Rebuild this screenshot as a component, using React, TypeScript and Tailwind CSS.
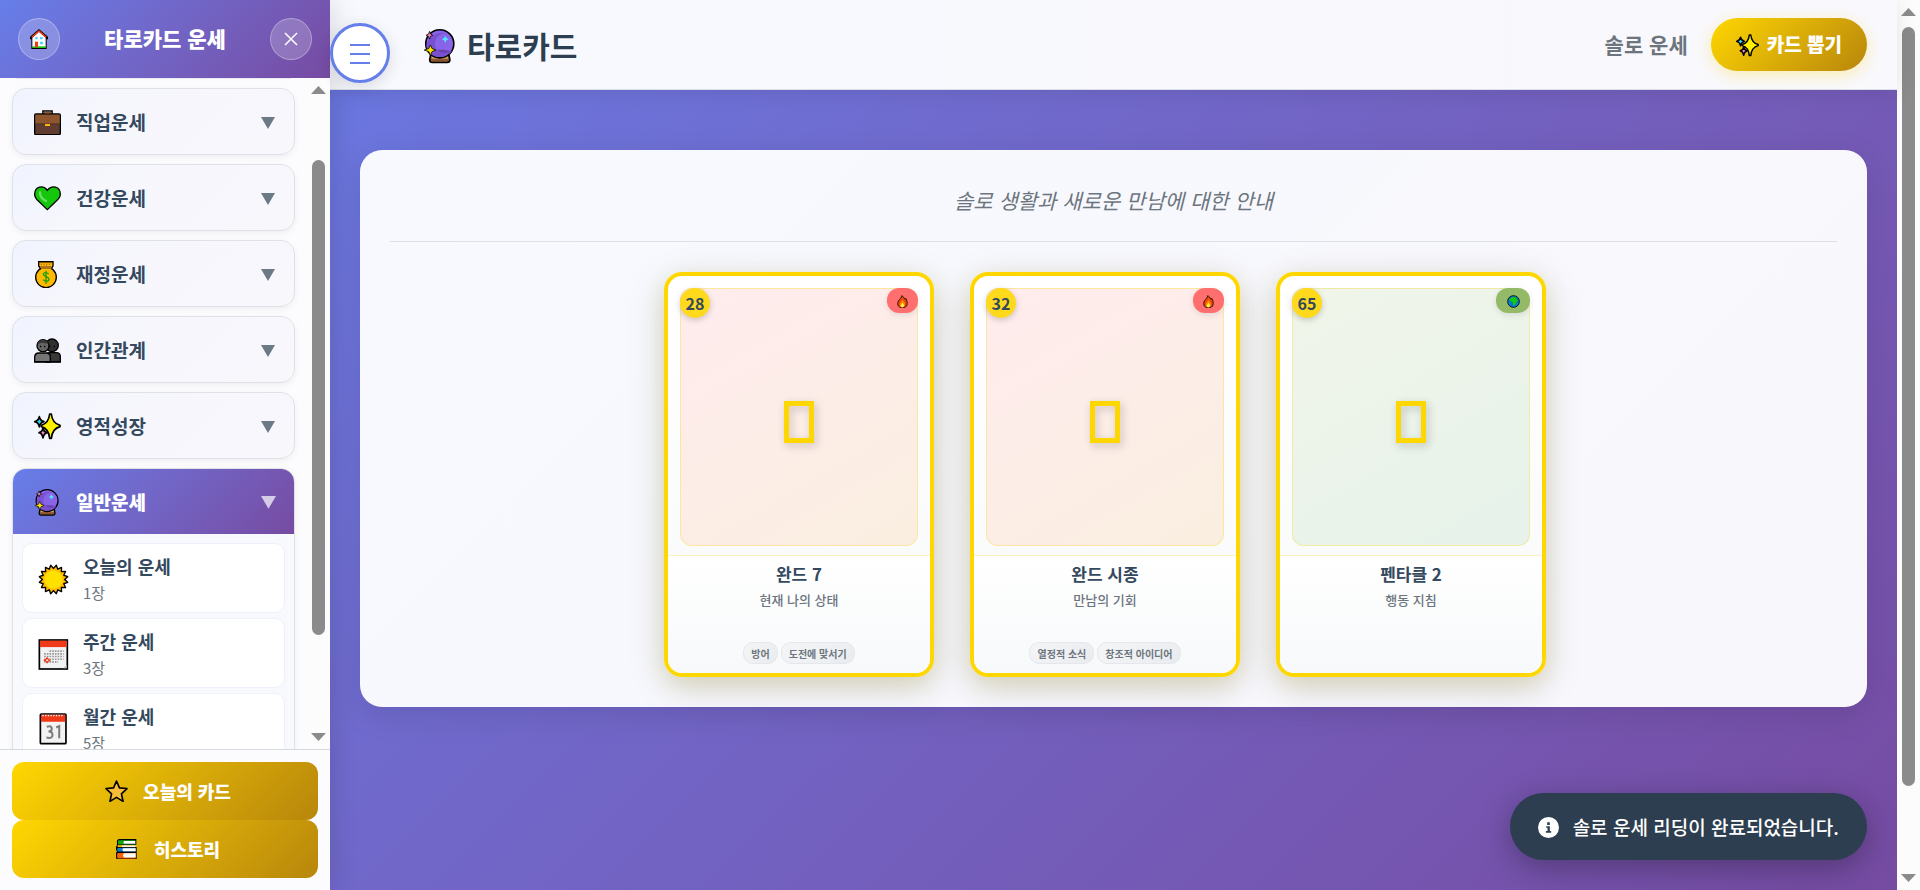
import React from 'react';
import type { ReactNode } from 'react';

type IconProps = { className?: string };

function HouseIcon({ className }: IconProps) {
  return (
    <svg viewBox="0 0 54 60" className={className} aria-hidden="true">
      <path d="M27 0 54 23v8h-4v29H4V31H0v-8z" fill="#000" />
      <path d="M27 8 47 26v29H7V26z" fill="#fff" />
      <path d="M27 3 50 23l-2 4L27 9 6 27l-2-4z" fill="#f03a17" />
      <path d="M7 52h40v5H7z" fill="#16c60c" />
      <path d="M15 38h9v17h-9z" fill="#f03a17" />
      <path d="M16 24h7v7h-7zM30 24h8v7h-8zM30 38h9v8h-9z" fill="#4fd5ff" />
    </svg>
  );
}

function BriefcaseIcon({ className }: IconProps) {
  return (
    <svg viewBox="0 0 81 76" className={className} aria-hidden="true">
      <path d="M27 12V3h27v9" fill="none" stroke="#000" strokeWidth="5" />
      <path d="M30 13V7h21v6" fill="none" stroke="#8e562e" strokeWidth="4" />
      <rect x="2" y="12" width="77" height="62" rx="4" fill="#603d30" stroke="#000" strokeWidth="4" />
      <path d="M4 14h73v28H4z" fill="#8e562e" />
      <path d="M4 42h73" stroke="#4a2c22" strokeWidth="3" />
      <path d="M33 42h15v6H33z" fill="#ffb900" />
    </svg>
  );
}

function HeartIcon({ className }: IconProps) {
  return (
    <svg viewBox="0 0 81 74" className={className} aria-hidden="true">
      <path d="M40 13C28-4 2 1 2 25c0 10 6 16 12 21l26 25 26-25c6-5 13-11 13-21C79 1 53-4 40 13z" fill="#16c60c" stroke="#000" strokeWidth="4" />
      <path d="M18 19c-1 13 5 19 18 26" fill="none" stroke="#6be065" strokeWidth="7" strokeLinecap="round" />
    </svg>
  );
}

function MoneyBagIcon({ className }: IconProps) {
  return (
    <svg viewBox="0 0 81 83" className={className} aria-hidden="true">
      <circle cx="36" cy="49" r="31" fill="#ffb900" stroke="#000" strokeWidth="4" />
      <path d="m20 23-6-8V2h43v13l-5 8z" fill="#ffb900" stroke="#000" strokeWidth="4" />
      <path d="M16 5h38M22 9v3m8-3v4m8-4v4m8-4v3" stroke="#5a3b00" strokeWidth="2" />
      <path d="M18 18h35" stroke="#a4632e" strokeWidth="5" />
      <path d="M21 22h31v7H21z" fill="#ffb900" />
      <path d="M44 39c-6-6-16-5-16 1 0 8 17 6 17 15 0 7-12 8-18 1M36 29v40" fill="none" stroke="#13a10e" strokeWidth="4" />
    </svg>
  );
}

function PeopleIcon({ className }: IconProps) {
  return (
    <svg viewBox="0 0 81 74" className={className} aria-hidden="true">
      <circle cx="54" cy="22" r="19" fill="#303030" stroke="#000" strokeWidth="4" />
      <path d="M35 72V56q0-12 12-12h20q12 0 12 12v16z" fill="#383838" stroke="#000" strokeWidth="4" />
      <circle cx="27" cy="23" r="18" fill="#666" stroke="#000" strokeWidth="4" />
      <path d="M10 19C12 4 38 0 44 17c-12 1-18-6-34 2z" fill="#383838" />
      <path d="M2 72V58q0-13 13-13h22q12 0 12 13v14z" fill="#767676" stroke="#000" strokeWidth="4" />
      <path d="M2 71h77" stroke="#000" strokeWidth="4" />
      <path d="M20 23v5m12-5v5m16-5v5m13-5v5" stroke="#000" strokeWidth="4" />
    </svg>
  );
}

function SparklesIcon({ className }: IconProps) {
  return (
    <svg viewBox="0 0 81 79" className={className} aria-hidden="true">
      <g stroke="#000" strokeWidth="5" strokeLinejoin="round">
        <path d="M27 45q2 12 13 14-11 3-13 16-2-13-12-16 10-2 12-14z" fill="#ff8ac0" />
        <path d="M16 11q2 12 14 15-12 3-14 16-2-13-14-16 12-3 14-15z" fill="#31d2f7" />
        <path d="M47 3h5q3 28 26 34v4q-23 6-26 35h-5Q44 47 22 41v-4Q44 31 47 3z" fill="#fff100" />
      </g>
    </svg>
  );
}

function CrystalBallIcon({ className }: IconProps) {
  return (
    <svg viewBox="0 0 82 89" className={className} aria-hidden="true">
      <path d="M19 68h48l2 11q0 7-7 7H24q-7 0-7-7z" fill="#8e562e" stroke="#000" strokeWidth="4" />
      <path d="M22 69h42v7H22z" fill="#d6a475" />
      <circle cx="43" cy="38" r="36" fill="#8764e8" stroke="#000" strokeWidth="4" />
      <path d="M16 61c12 14 42 13 53-3-5-6-44-7-53 3z" fill="#6a40ad" />
      <path d="M9 45C10 18 41 3 62 12 42 8 24 26 33 50c8 12 26 14 41 6C63 77 10 76 9 45z" fill="#7950cf" />
      <path d="m57 17 3 6 6 3-6 3-3 6-3-6-6-3 6-3z" fill="#50e6ff" />
      <path d="m17 6 2 7 6 3-6 3-2 7-3-7-6-3 6-3z" fill="#f488b7" stroke="#000" strokeWidth="2" />
      <path d="m19 41 4 9 10 4-10 4-4 10-4-10-12-4 12-4z" fill="#ffe400" stroke="#000" strokeWidth="2" />
    </svg>
  );
}

const sunRays = Array.from({ length: 32 }, (_, i) => {
  const angle = (Math.PI * (i + 1)) / 16;
  const radius = i % 2 === 0 ? 43 : 33;
  return `${46 + radius * Math.sin(angle)},${46 - radius * Math.cos(angle)}`;
}).join(' ');

function SunIcon({ className }: IconProps) {
  return (
    <svg viewBox="0 0 92 92" className={className} aria-hidden="true">
      <polygon points={sunRays} fill="#ffb900" stroke="#000" strokeWidth="4" strokeLinejoin="round" />
      <circle cx="46" cy="46" r="27" fill="#ffe100" />
    </svg>
  );
}

function CalendarIcon({ className }: IconProps) {
  return (
    <svg viewBox="0 0 92 92" className={className} aria-hidden="true">
      <rect x="4" y="3" width="83" height="86" fill="#f2f2f2" stroke="#000" strokeWidth="5" />
      <path d="M6 5h79v19H6z" fill="#f03a17" />
      <path
        d="M34 36h42M18 44h58M18 52h58M18 60h58M18 68h42"
        stroke="#9b9b9b"
        strokeWidth="5"
        strokeDasharray="5 3"
      />
      <path d="m27 56 3 4 5 3-5 3-3 4-3-4-5-3 5-3z" fill="#fff" stroke="#f03a17" strokeWidth="4" />
      <path d="m75 87 10-10v10z" fill="#c4c4c4" />
    </svg>
  );
}

function TearOffCalendarIcon({ className }: IconProps) {
  return (
    <svg viewBox="0 0 92 94" className={className} aria-hidden="true">
      <rect x="7" y="3" width="76" height="88" rx="3" fill="#f2f2f2" stroke="#000" strokeWidth="5" />
      <path d="M9 5h72v21H9z" fill="#f03a17" />
      <path d="M13 8h64" stroke="#fff" strokeWidth="4" strokeDasharray="4 4" />
      <path d="M26 41q15-5 15 6 0 8-10 8 12 0 12 10 0 12-18 8M54 43l9-4v36" fill="none" stroke="#7c7c7c" strokeWidth="6" />
    </svg>
  );
}

function StarIcon({ className }: IconProps) {
  return (
    <svg viewBox="0 0 70 68" className={className} aria-hidden="true">
      <path d="m35 3 9 21 23 2-17 16 5 23-20-12-20 12 5-23L3 26l23-2z" fill="#f7bd38" stroke="#000" strokeWidth="5" strokeLinejoin="round" />
    </svg>
  );
}

function BooksIcon({ className }: IconProps) {
  return (
    <svg viewBox="0 0 65 64" className={className} aria-hidden="true">
      <path d="M8 0h55v18h-4v7h5v36q0 3-3 3H5q-5-1-5-10V43l3-5-3-5v-9l3-5V5z" fill="#000" />
      <path d="M7 4h53v3H25v8h35v2H7q-3-7 0-13z" fill="#16a810" />
      <path d="M25 6h35v9H25q-4-4 0-9z" fill="#fff" />
      <path d="M5 19h55v6H5z" fill="#ffb900" />
      <path d="M18 20h42v5H18z" fill="#f5f5f5" />
      <path d="M5 28h56v11H5q-3-6 0-11z" fill="#087fd4" />
      <path d="M22 29h39v9H22q-4-4 0-9z" fill="#fff" />
      <path d="M5 43h56v17H5q-4-9 0-17z" fill="#f7630c" />
      <path d="M25 44h36v13H25q-6-6 0-13z" fill="#fff" />
    </svg>
  );
}

function FireIcon({ className }: IconProps) {
  return (
    <svg viewBox="0 0 36 44" className={className} aria-hidden="true">
      <path d="M16 2c3 4 8 6 10 12l3-3c8 15 6 31-11 31C1 42-2 26 8 15c2-3 7-6 8-13z" fill="#e8480c" stroke="#241006" strokeWidth="3" />
      <path d="M17 14c2 6 8 7 9 15 1 7-4 11-9 11S8 35 9 29c1-4 7-8 8-15z" fill="#ff8a00" />
      <path d="M18 25c2 4 5 5 5 9s-3 6-6 6-6-2-5-6c1-3 5-5 6-9z" fill="#fff04a" />
    </svg>
  );
}

function EarthIcon({ className }: IconProps) {
  return (
    <svg viewBox="0 0 40 40" className={className} aria-hidden="true">
      <circle cx="20" cy="20" r="18" fill="#0078d7" stroke="#06121d" strokeWidth="3" />
      <path d="M7 13 17 6l10 1 3 5 5 6-5 2-4 9-5 5-3-8-2-6-7-1z" fill="#16c60c" />
      <path d="m5 20 3 8-2-1zM32 27l2-4-1 7z" fill="#16c60c" />
    </svg>
  );
}

function InfoIcon({ className }: IconProps) {
  return (
    <svg viewBox="0 0 64 64" className={className} aria-hidden="true">
      <circle cx="32" cy="32" r="32" fill="#fff" />
      <path d="M28 16h8v8h-8zM25 28h11v15h4v5H24v-5h5V33h-4z" fill="#2c3e50" />
    </svg>
  );
}

function CloseIcon() {
  return (
    <svg viewBox="0 0 14 14" className="size-[14px]" aria-hidden="true">
      <path d="m1 1 12 12M13 1 1 13" stroke="#fff" strokeWidth="1.5" />
    </svg>
  );
}

function Triangle({ className }: IconProps) {
  return (
    <svg viewBox="0 0 14 12" className={className} aria-hidden="true">
      <path d="M0 0h14L7 12z" fill="currentColor" />
    </svg>
  );
}

function ScrollArrow({ down = false }: { down?: boolean }) {
  return (
    <svg viewBox="0 0 15 8" className="h-2 w-[15px] shrink-0" aria-hidden="true">
      <path d={down ? 'M0 0h15L7.500 8z' : 'M0 8h15L7.500 0z'} fill="#8b8b8b" />
    </svg>
  );
}

function ScrollRail({ before, thumb, after }: { before: number; thumb: number; after: number }) {
  return (
    <div className="flex w-[23px] shrink-0 flex-col items-center bg-[#fcfcfc] py-2" aria-hidden="true">
      <ScrollArrow />
      <div className="my-[11px] flex min-h-0 flex-1 flex-col">
        <div style={{ flexGrow: before }} />
        <div className="w-[13px] rounded-full bg-[#8b8b8b]" style={{ flexGrow: thumb }} />
        <div style={{ flexGrow: after }} />
      </div>
      <ScrollArrow down />
    </div>
  );
}

const categories: { label: string; icon: ReactNode }[] = [
  { label: '직업운세', icon: <BriefcaseIcon className="w-[27px]" /> },
  { label: '건강운세', icon: <HeartIcon className="w-[27px]" /> },
  { label: '재정운세', icon: <MoneyBagIcon className="w-[27px]" /> },
  { label: '인간관계', icon: <PeopleIcon className="w-[27px]" /> },
  { label: '영적성장', icon: <SparklesIcon className="w-[27px]" /> },
];

const generalReadings: { label: string; count: string; icon: ReactNode }[] = [
  { label: '오늘의 운세', count: '1장', icon: <SunIcon className="w-[31px]" /> },
  { label: '주간 운세', count: '3장', icon: <CalendarIcon className="w-[31px]" /> },
  { label: '월간 운세', count: '5장', icon: <TearOffCalendarIcon className="w-[31px]" /> },
];

type Card = {
  number: number;
  name: string;
  position: string;
  element: 'fire' | 'earth';
  keywords: string[];
};

const cards: Card[] = [
  { number: 28, name: '완드 7', position: '현재 나의 상태', element: 'fire', keywords: ['방어', '도전에 맞서기'] },
  { number: 32, name: '완드 시종', position: '만남의 기회', element: 'fire', keywords: ['열정적 소식', '창조적 아이디어'] },
  { number: 65, name: '펜타클 2', position: '행동 지침', element: 'earth', keywords: [] },
];

function Sidebar() {
  return (
    <aside className="relative z-10 flex w-[330px] shrink-0 flex-col bg-[#fcfcfe] shadow-[4px_0_24px_rgba(0,0,0,0.12)]">
      <header className="flex h-[78px] shrink-0 items-center justify-between bg-linear-135 from-[#667eea] to-[#764ba2] px-[18px]">
        <button aria-label="홈" className="flex size-[42px] items-center justify-center rounded-full border border-white/30 bg-white/20">
          <HouseIcon className="w-[18px]" />
        </button>
        <h2 className="text-[21px] font-black text-white">타로카드 운세</h2>
        <button aria-label="닫기" className="flex size-[42px] items-center justify-center rounded-full border border-white/30 bg-white/20">
          <CloseIcon />
        </button>
      </header>

      <div className="flex min-h-0 flex-1">
        <nav className="flex min-w-0 flex-1 flex-col gap-[9px] overflow-hidden px-3">
          <div className="mx-1 h-px shrink-0 bg-[#e9ebf0] shadow-[0_2px_6px_rgba(0,0,0,0.06)]" />
          {categories.map((c) => (
            <button
              key={c.label}
              className="flex h-[67px] shrink-0 items-center rounded-[14px] border border-[#dee2e6] bg-linear-135 from-[#f0f4ff] via-[#f6f6fd] via-30% to-[#f8f7fc] pt-0.5 pr-[19px] pl-[21px] text-left shadow-[0_2px_6px_rgba(0,0,0,0.06)]"
            >
              {c.icon}
              <span className="ml-[15px] flex-1 text-[19px] font-bold text-[#34495e]">{c.label}</span>
              <Triangle className="w-[14px] text-[#6c7a86]" />
            </button>
          ))}
          <section className="shrink-0 overflow-hidden rounded-[14px] border border-[#dee2e6] bg-[#f8f9fc] shadow-[0_2px_6px_rgba(0,0,0,0.06)]">
            <button
              aria-expanded="true"
              className="flex h-[65px] w-full items-center bg-linear-135 from-[#667eea] to-[#764ba2] pt-0.5 pr-[18px] pl-[21px] text-left"
            >
              <CrystalBallIcon className="w-[25px]" />
              <span className="ml-[17px] flex-1 text-[19px] font-black text-white">일반운세</span>
              <Triangle className="w-[15px] text-white/70" />
            </button>
            <ul className="flex flex-col gap-[5px] px-[9px] py-[9px]">
              {generalReadings.map((r) => (
                <li key={r.label}>
                  <button className="flex h-[70px] w-full items-center rounded-[10px] border border-[#eef1fb] bg-white px-[15px] pt-0.5 text-left">
                    {r.icon}
                    <span className="ml-[14px] flex flex-col">
                      <span className="text-[18px] leading-[27px] font-semibold text-[#34495e]">{r.label}</span>
                      <span className="text-[15px] leading-[25px] text-[#6c757d]">{r.count}</span>
                    </span>
                  </button>
                </li>
              ))}
            </ul>
          </section>
        </nav>
        <ScrollRail before={55} thumb={475} after={87} />
      </div>

      <footer className="flex shrink-0 flex-col border-t border-[#d5dadf] p-3">
        <button className="flex h-[58px] items-center justify-center gap-[15px] rounded-xl bg-linear-135 from-[#ffd700] to-[#b8860b] pl-1.5 text-[18px] font-black text-white">
          <StarIcon className="w-[23px]" />
          오늘의 카드
        </button>
        <button className="flex h-[58px] items-center justify-center gap-[17px] rounded-xl bg-linear-135 from-[#ffd700] to-[#b8860b] pl-1.5 text-[18px] font-black text-white">
          <BooksIcon className="w-[21px]" />
          히스토리
        </button>
      </footer>
    </aside>
  );
}

function TopBar() {
  return (
    <header className="flex h-[90px] shrink-0 items-center border-b border-[#dcdfe8] bg-linear-to-r from-[#f7f9fe] to-[#f9f8fc] pr-[30px] shadow-[0_2px_20px_rgba(0,0,0,0.1)]">
      <button
        aria-label="메뉴"
        className="relative z-20 mb-[6px] flex size-[60px] items-center justify-center self-end rounded-full border-3 border-[#667eea] bg-white shadow-[0_4px_16px_rgba(0,0,0,0.12)]"
      >
        <svg viewBox="0 0 20 20" className="mt-0.5 size-5" aria-hidden="true">
          <path d="M0 1h20M0 10h20M0 19h20" stroke="#667eea" strokeWidth="2" />
        </svg>
      </button>
      <h1 className="ml-[33px] flex items-center gap-3 text-[30px] leading-10 font-bold text-[#2c3e50]">
        <CrystalBallIcon className="mt-1 w-8" />
        타로카드
      </h1>
      <div className="ml-auto flex items-center gap-[23px]">
        <span className="text-[21px] font-semibold text-[#6c757d]">솔로 운세</span>
        <button className="flex h-[53px] items-center gap-2 rounded-full bg-linear-135 from-[#ffd700] to-[#b8860b] px-[25px] text-[19px] font-black text-white shadow-[0_4px_16px_rgba(255,215,0,0.3)]">
          <SparklesIcon className="mt-0.5 w-[23px]" />
          카드 뽑기
        </button>
      </div>
    </header>
  );
}

function TarotCard({ card }: { card: Card }) {
  const fire = card.element === 'fire';
  return (
    <article className="flex h-[405px] w-[270px] flex-col overflow-hidden rounded-[18px] border-4 border-[#ffd700] bg-linear-to-b from-white to-[#f8f9fa] shadow-[0_10px_40px_rgba(0,0,0,0.12),0_8px_24px_rgba(184,160,11,0.2)]">
      <div className="px-3 pt-3 pb-[9px]">
        <div
          className={
            'relative flex h-[258px] items-center justify-center rounded-xl border border-[#ffd700]/30 bg-linear-150 ' +
            (fire ? 'from-[#ffecee] to-[#faeee0]' : 'from-[#f1f5ea] to-[#e6f2ea]')
          }
        >
          <span className="absolute -top-px -left-px flex size-[30px] items-center justify-center rounded-full bg-[#ffd91c] text-[16px] font-bold text-[#34495e] shadow-[0_2px_6px_rgba(0,0,0,0.2)]">
            {card.number}
          </span>
          <span
            className={
              'absolute -top-px -right-px flex h-[25px] items-center justify-center rounded-xl shadow-[0_2px_6px_rgba(0,0,0,0.1)] ' +
              (fire ? 'w-[31px] bg-[#ff6f6f]' : 'w-[34px] bg-[#95ba67]')
            }
          >
            {fire ? <FireIcon className="mt-0.5 w-[11px]" /> : <EarthIcon className="mt-0.5 w-[13px]" />}
          </span>
          <div className="mt-2.5 h-[42px] w-[30px] border-5 border-[#ffd700] drop-shadow-[2px_3px_4px_rgba(0,0,0,0.2)]" />
        </div>
      </div>
      <div className="flex flex-1 flex-col items-center border-t border-[#fff0c0] bg-linear-to-b from-white to-[#f7f9fa] pt-1.5 pb-[9px]">
        <h3 className="text-[17px] leading-6 font-bold text-[#34495e]">{card.name}</h3>
        <p className="mt-px text-[13px] leading-[26px] font-medium text-[#6c757d]">{card.position}</p>
        <div className="mt-auto flex gap-[3px]">
          {card.keywords.map((k) => (
            <span
              key={k}
              className="flex h-[22px] items-center rounded-[10px] border border-[#e4e7eb] bg-linear-135 from-[#f4f5f7] to-[#e9ecef] px-[7px] text-[10px] font-semibold text-[#6c757d]"
            >
              {k}
            </span>
          ))}
        </div>
      </div>
    </article>
  );
}

export default function App() {
  return (
    <div
      lang="ko"
      className="flex h-screen overflow-hidden bg-linear-135 from-[#667eea] to-[#764ba2] font-['Noto_Sans_CJK_KR',sans-serif]"
    >
      <Sidebar />
      <div className="relative flex min-w-0 flex-1 flex-col">
        <TopBar />
        <main className="flex-1 px-[30px] pt-[60px]">
          <section className="rounded-[22px] bg-linear-135 from-[#f7f9fe] to-[#f8f7fc] px-[30px] pt-[30px] pb-[30px] shadow-[0_8px_32px_rgba(0,0,0,0.1)]">
            <p className="border-b border-[#dee2e6] pt-1 pb-[25px] text-center text-[21px] leading-8 text-[#6c757d] italic">
              솔로 생활과 새로운 만남에 대한 안내
            </p>
            <div className="mt-[30px] flex justify-center gap-9 pr-[17px]">
              {cards.map((card) => (
                <TarotCard key={card.number} card={card} />
              ))}
            </div>
          </section>
        </main>
        <div
          role="status"
          className="absolute right-[30px] bottom-[30px] flex h-[67px] items-center gap-[14px] rounded-full bg-[#2c3e50] px-7 pt-0.5 text-[19px] font-medium text-white shadow-[0_8px_32px_rgba(0,0,0,0.3)]"
        >
          <InfoIcon className="w-[21px]" />
          솔로 운세 리딩이 완료되었습니다.
        </div>
      </div>
      <ScrollRail before={0} thumb={759} after={77} />
    </div>
  );
}
